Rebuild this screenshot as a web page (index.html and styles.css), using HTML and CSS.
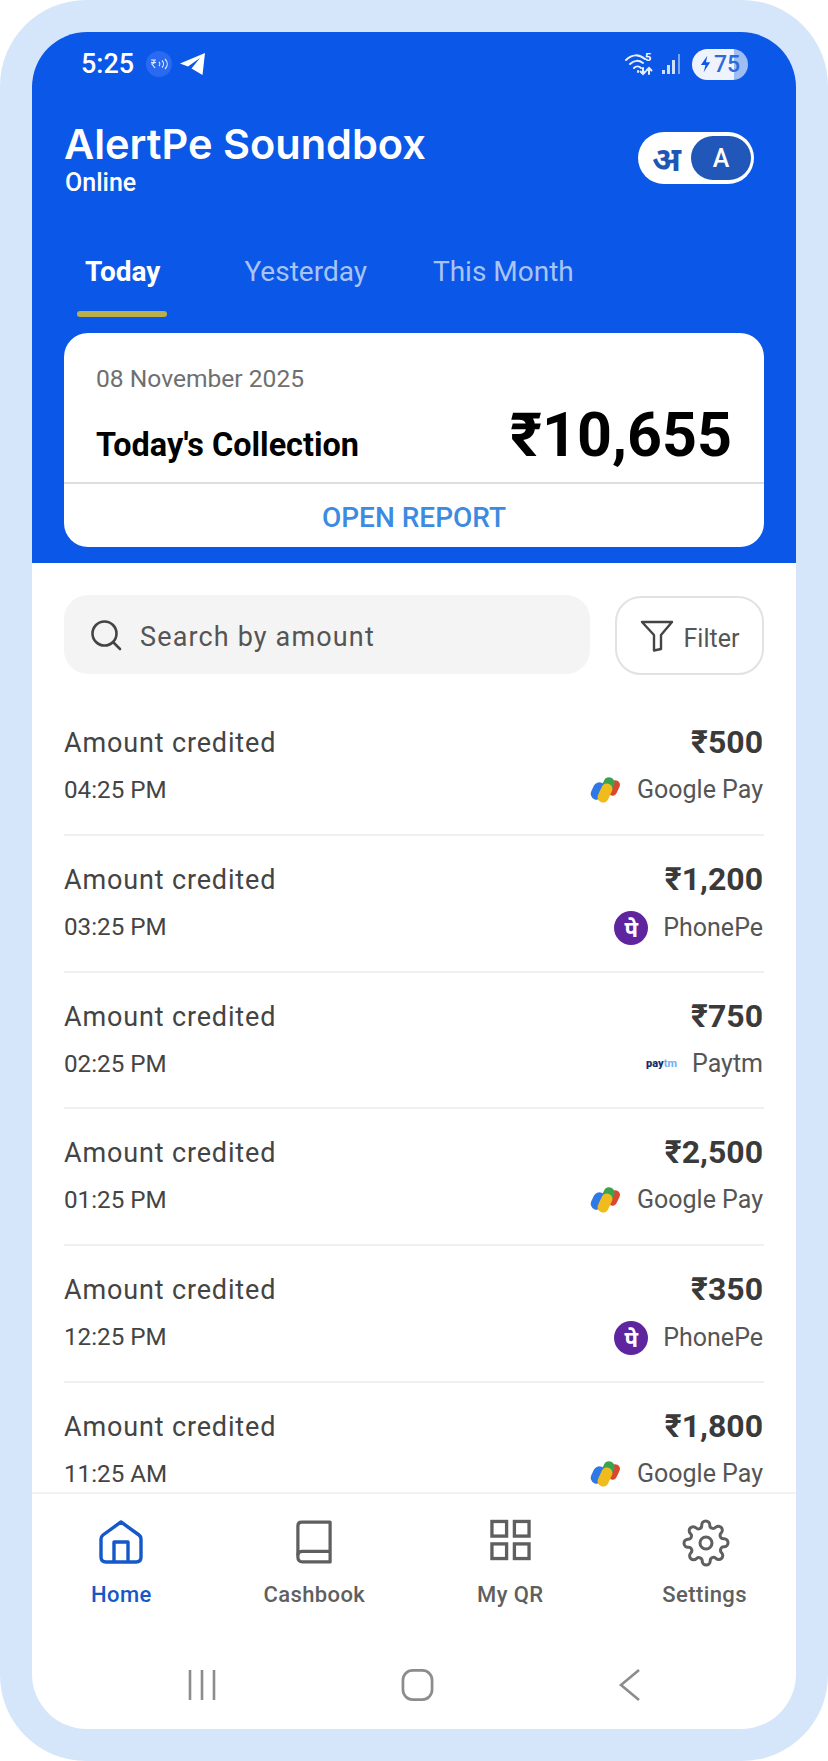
FILE: index.html
```html
<!DOCTYPE html>
<html lang="en">
<head>
    <meta charset="UTF-8">
    <meta name="viewport" content="width=device-width, initial-scale=1.0">
    <title>AlertPe Soundbox</title>
    <link rel="stylesheet" href="styles.css">
</head>
<body>
    <svg class="defs" width="0" height="0">
        <symbol id="gpay" viewBox="0 0 32 28">
            <rect x="19.500" y="4" width="9" height="16" rx="4.500" fill="#d9482f" transform="rotate(25 24 12)"/>
            <rect x="12.500" y="1" width="11" height="16" rx="5.500" fill="#3aa34f" transform="rotate(25 18 9)"/>
            <rect x="2" y="6" width="12" height="18" rx="6" fill="#2f79e6" transform="rotate(25 8 15)"/>
            <rect x="9.500" y="7" width="11" height="20" rx="5.500" fill="#f0bb1c" transform="rotate(25 15 17)"/>
        </symbol>
    </svg>

    <div class="device">
        <div class="screen">
            <header class="top">
                <div class="status">
                    <span class="clock">5:25</span>
                    <span class="upi"><svg width="18" height="12" viewBox="0 0 18 12" fill="none" stroke="#dce8ff" stroke-width="1.2"><path d="M1 2h5M1 4.5h5M2 2c3 0 3 4 0 4l3 4M9 4c1 1 1 3 0 4M12 2.500c2 2 2 5 0 7M15 1c3 3 3 7 0 10"/></svg></span>
                    <svg class="telegram" width="27" height="24" viewBox="0 0 27 24"><path d="M26 1 L1 11.500 L9 14.500 L21 6 L12.500 16.500 L23.500 23 Z" fill="#fff"/></svg>
                    <span class="status-right">
                        <svg width="30" height="26" viewBox="0 0 30 26" fill="none" stroke="#e6eeff" stroke-width="2" stroke-linecap="round"><path d="M1 9c6-6 13-6 19-1M5 13c4-4 9-4 13-1M9 17c2-2 5-2 7 0"/><path d="M13 20v1M18 17v6M15.500 20.500l2.500 2.500 2.500-2.500M24 23v-6M21.500 19.500l2.500-2.500 2.500 2.500"/><text x="20" y="10" class="wifi-five">5</text></svg>
                        <svg width="20" height="22" viewBox="0 0 20 22" fill="#cfe0ff"><rect x="0" y="17" width="3" height="4"/><rect x="5" y="12" width="3" height="9"/><rect x="10" y="7" width="3" height="14"/><rect x="16" y="1" width="2" height="20" fill="#7da4f0"/></svg>
                        <span class="battery">
                            <svg width="13" height="20" viewBox="0 0 14 20"><path d="M9 1 L2 11 H7 L5 19 L12 8 H7.500 Z" fill="#0b57e8"/></svg>
                            <span>75</span>
                        </span>
                    </span>
                </div>

                <div class="brand-row">
                    <div>
                        <h1>AlertPe Soundbox</h1>
                        <p class="online">Online</p>
                    </div>
                    <div class="lang">
                        <span class="lang-hi">अ</span>
                        <span class="lang-en">A</span>
                    </div>
                </div>

                <nav class="tabs">
                    <span class="tab tab-active">Today</span>
                    <span class="tab tab-yesterday">Yesterday</span>
                    <span class="tab tab-month">This Month</span>
                </nav>
                <div class="tab-line"></div>

                <section class="card">
                    <div class="card-body">
                        <p class="card-date">08 November 2025</p>
                        <div class="card-total">
                            <span class="card-label">Today's Collection</span>
                            <span class="card-amount">₹10,655</span>
                        </div>
                    </div>
                    <div class="card-link">OPEN REPORT</div>
                </section>
            </header>

            <div class="tools">
                <div class="search">
                    <svg width="32" height="32" viewBox="0 0 32 32" fill="none" stroke="#444" stroke-width="2.600" stroke-linecap="round"><circle cx="14.500" cy="14.500" r="12"/><path d="M24 24l6 6"/></svg>
                    <span>Search by amount</span>
                </div>
                <div class="filter">
                    <svg width="34" height="32" viewBox="0 0 34 32" fill="none" stroke="#444" stroke-width="2.400" stroke-linejoin="round"><path d="M2 2h30L21 15v14l-7 1.500V15z"/></svg>
                    <span>Filter</span>
                </div>
            </div>

            <div class="list">
                <div class="txn">
                    <div class="txn-left"><span class="txn-title">Amount credited</span><span class="txn-time">04:25 PM</span></div>
                    <div class="txn-right"><span class="txn-amount">₹500</span><span class="txn-app"><svg class="logo-gpay"><use href="#gpay"/></svg>Google Pay</span></div>
                </div>
                <div class="txn">
                    <div class="txn-left"><span class="txn-title">Amount credited</span><span class="txn-time">03:25 PM</span></div>
                    <div class="txn-right"><span class="txn-amount">₹1,200</span><span class="txn-app"><span class="logo-pe">पे</span>PhonePe</span></div>
                </div>
                <div class="txn">
                    <div class="txn-left"><span class="txn-title">Amount credited</span><span class="txn-time">02:25 PM</span></div>
                    <div class="txn-right"><span class="txn-amount">₹750</span><span class="txn-app"><span class="logo-paytm"><b>pay</b><i>tm</i></span>Paytm</span></div>
                </div>
                <div class="txn">
                    <div class="txn-left"><span class="txn-title">Amount credited</span><span class="txn-time">01:25 PM</span></div>
                    <div class="txn-right"><span class="txn-amount">₹2,500</span><span class="txn-app"><svg class="logo-gpay"><use href="#gpay"/></svg>Google Pay</span></div>
                </div>
                <div class="txn">
                    <div class="txn-left"><span class="txn-title">Amount credited</span><span class="txn-time">12:25 PM</span></div>
                    <div class="txn-right"><span class="txn-amount">₹350</span><span class="txn-app"><span class="logo-pe">पे</span>PhonePe</span></div>
                </div>
                <div class="txn">
                    <div class="txn-left"><span class="txn-title">Amount credited</span><span class="txn-time">11:25 AM</span></div>
                    <div class="txn-right"><span class="txn-amount">₹1,800</span><span class="txn-app"><svg class="logo-gpay"><use href="#gpay"/></svg>Google Pay</span></div>
                </div>
            </div>

            <nav class="bottom-nav">
                <div class="nav-item nav-active">
                    <svg width="44" height="46" viewBox="0 0 44 46" fill="none" stroke="#1558c8" stroke-width="3.400" stroke-linejoin="round"><path d="M22 3 L40 16 Q42 17.500 42 20 V38 Q42 43 37 43 H7 Q2 43 2 38 V20 Q2 17.500 4 16 Z"/><path d="M15 43 V23 H29 V43"/></svg>
                    <span>Home</span>
                </div>
                <div class="nav-item">
                    <svg width="36" height="46" viewBox="0 0 38 46" fill="none" stroke="#5f5f5f" stroke-width="3.400" stroke-linejoin="round"><path d="M6 2 H36 V44 H7 Q2 44 2 39 V6 Q2 2 6 2 Z"/><path d="M2 37 Q2 33 7 33 H36"/></svg>
                    <span>Cashbook</span>
                </div>
                <div class="nav-item nav-qr">
                    <svg width="41" height="42" viewBox="0 0 42 42" fill="none" stroke="#5f5f5f" stroke-width="3.400"><rect x="2" y="2" width="15" height="15"/><rect x="25" y="2" width="15" height="15"/><rect x="2" y="25" width="15" height="15"/><rect x="25" y="25" width="15" height="15"/></svg>
                    <span>My QR</span>
                </div>
                <div class="nav-item">
                    <svg class="gear" width="48" height="48" viewBox="0 0 24 24" fill="none" stroke="#5f5f5f" stroke-width="1.500" stroke-linecap="round" stroke-linejoin="round"><circle cx="12" cy="12" r="3"/><path d="M19.400 15a1.650 1.650 0 0 0 .33 1.820l.06.06a2 2 0 1 1-2.830 2.830l-.06-.06a1.650 1.650 0 0 0-2.800 1.170V21a2 2 0 0 1-4 0v-.09a1.650 1.650 0 0 0-2.820-1.150l-.06.06a2 2 0 1 1-2.830-2.830l.06-.06a1.650 1.650 0 0 0-1.170-2.800H3a2 2 0 0 1 0-4h.09a1.650 1.650 0 0 0 1.150-2.820l-.06-.06a2 2 0 1 1 2.830-2.830l.06.06a1.650 1.650 0 0 0 2.800-1.170V3a2 2 0 0 1 4 0v.09a1.650 1.650 0 0 0 2.820 1.150l.06-.06a2 2 0 1 1 2.830 2.830l-.06.06a1.650 1.650 0 0 0 1.170 2.800H21a2 2 0 0 1 0 4h-.09a1.650 1.650 0 0 0-1.510 1z"/></svg>
                    <span>Settings</span>
                </div>
            </nav>

            <div class="system-nav">
                <svg width="30" height="32" viewBox="0 0 30 32" stroke="#8c8c8c" stroke-width="2.600"><path d="M3 1v30M15 1v30M27 1v30"/></svg>
                <svg width="33" height="34" viewBox="0 0 34 34" fill="none" stroke="#8c8c8c" stroke-width="2.800"><rect x="2" y="2" width="30" height="30" rx="10"/></svg>
                <svg width="24" height="34" viewBox="0 0 24 34" fill="none" stroke="#8c8c8c" stroke-width="2.600"><path d="M21 2 L3 17 L21 32"/></svg>
            </div>
        </div>
    </div>
</body>
</html>
```

FILE: styles.css
```css
* {
    box-sizing: border-box;
}
html, body {
    margin: 0;
    padding: 0;
    background-color: #fff;
}
body {
    font-family: Roboto, "Noto Sans", "Liberation Sans", sans-serif;
    color: #333;
}
h1, p {
    margin: 0;
}
.defs {
    position: absolute;
}

.device {
    width: 828px;
    height: 1761px;
    padding: 32px 32px 31px;
    background-color: #d6e6fa;
    border-radius: 86px;
}
.screen {
    height: 1697px;
    background-color: #fff;
    border-radius: 55px;
    overflow: hidden;
    display: flex;
    flex-direction: column;
}

/* blue header */
.top {
    height: 531px;
    flex: none;
    padding: 0 32px;
    background-color: #0b57e8;
    color: #fff;
}
.status {
    height: 64px;
    padding: 0 16px 0 17px;
    display: flex;
    align-items: center;
    gap: 12px;
}
.clock {
    font-size: 27px;
    font-weight: 500;
}
.upi {
    width: 26px;
    height: 26px;
    border-radius: 50%;
    background-color: #2a6af0;
    display: flex;
    align-items: center;
    justify-content: center;
}
.telegram {
    margin-left: -5px;
}
.status-right {
    margin-left: auto;
    display: flex;
    align-items: center;
    gap: 7px;
}
.wifi-five {
    font-size: 11px;
    font-weight: 700;
    fill: #fff;
    stroke: none;
}
.battery {
    width: 56px;
    height: 31px;
    margin-left: 3px;
    padding-left: 7px;
    border-radius: 16px;
    background: linear-gradient(to right, #eef3fd 75%, #9dbdf3 75%);
    color: #2f6bd8;
    font-size: 23px;
    font-weight: 500;
    display: flex;
    align-items: center;
    gap: 2px;
}
.brand-row {
    height: 135px;
    display: flex;
    justify-content: space-between;
}
h1 {
    margin-top: 21px;
    font-family: Inter, Roboto, sans-serif;
    font-size: 41.500px;
    font-weight: 600;
    line-height: 54px;
}
.online {
    margin-left: 1px;
    font-size: 25px;
    font-weight: 500;
    line-height: 24px;
}
.lang {
    width: 116px;
    height: 52px;
    margin: 36px 10px 0 0;
    padding: 3px;
    border-radius: 26px;
    background-color: #fff;
    display: flex;
    align-items: center;
    justify-content: space-between;
}
.lang-hi {
    margin-left: 11px;
    color: #1f56b5;
    font-family: "Noto Sans", "Noto Sans CJK SC", sans-serif;
    font-size: 34px;
    font-weight: 700;
    line-height: 40px;
}
.lang-en {
    width: 60px;
    height: 44px;
    border-radius: 22px;
    background-color: #2057b8;
    color: #fff;
    font-size: 25px;
    font-weight: 500;
    display: flex;
    align-items: center;
    justify-content: center;
}
.tabs {
    height: 80px;
    display: flex;
    align-items: center;
    font-size: 28px;
    color: #a8c4f5;
}
.tab-active {
    margin-left: 21px;
    color: #fff;
    font-weight: 700;
}
.tab-yesterday {
    margin-left: 84px;
}
.tab-month {
    margin-left: 66px;
}
.tab-line {
    width: 90px;
    height: 6px;
    margin: 0 0 16px 13px;
    border-radius: 3px;
    background-color: #b9b04a;
}

/* total card */
.card {
    height: 214px;
    border-radius: 24px;
    background-color: #fff;
    color: #000;
}
.card-body {
    height: 151px;
    padding: 28px 32px 0;
    border-bottom: 2px solid #dedede;
}
.card-date {
    color: #6f6f6f;
    font-size: 24.600px;
    line-height: 36px;
}
.card-total {
    display: flex;
    justify-content: space-between;
    align-items: baseline;
    margin-top: 4px;
}
.card-label {
    font-size: 32.400px;
    font-weight: 700;
}
.card-amount {
    font-size: 61px;
    font-weight: 700;
    line-height: 68px;
}
.card-link {
    height: 63px;
    padding-top: 3px;
    color: #3d8be0;
    font-size: 28px;
    font-weight: 500;
    display: flex;
    align-items: center;
    justify-content: center;
}

/* search + filter */
.tools {
    flex: none;
    padding: 32px 32px 0;
    display: flex;
    justify-content: space-between;
    align-items: flex-start;
}
.search {
    width: 526px;
    height: 79px;
    padding-left: 26px;
    border-radius: 24px;
    background-color: #f4f4f4;
    color: #555;
    font-size: 27px;
    letter-spacing: 1.150px;
    display: flex;
    align-items: center;
    gap: 18px;
}
.search span, .filter span {
    padding-top: 5px;
}
.filter {
    width: 149px;
    height: 79px;
    margin-top: 1px;
    border: 2px solid #e2e2e2;
    border-radius: 26px;
    color: #555;
    font-size: 25px;
    display: flex;
    align-items: center;
    justify-content: center;
    gap: 10px;
}

/* transactions */
.list {
    flex: 1;
    margin-top: 24px;
    padding: 0 32px;
    overflow: hidden;
}
.txn {
    height: 136.800px;
    padding-top: 28px;
    border-bottom: 2px solid #f0f0f0;
    display: flex;
    justify-content: space-between;
}
.txn:last-child {
    border-bottom: none;
}
.txn-left, .txn-right {
    display: flex;
    flex-direction: column;
    gap: 15px;
}
.txn-right {
    align-items: flex-end;
    padding-right: 1px;
}
.txn-title {
    font-size: 27px;
    line-height: 32px;
    color: #444;
    letter-spacing: 0.850px;
}
.txn-time {
    font-size: 24.200px;
    line-height: 32px;
    color: #444;
}
.txn-amount {
    margin-top: -1px;
    font-size: 32px;
    font-weight: 700;
    line-height: 32px;
    color: #3a3a3a;
}
.txn-app {
    margin-top: 1px;
    font-size: 25px;
    line-height: 32px;
    color: #555;
    display: flex;
    align-items: center;
    gap: 15px;
}
.logo-gpay {
    width: 32px;
    height: 28px;
}
.logo-pe {
    width: 34px;
    height: 34px;
    border-radius: 50%;
    background-color: #5f259f;
    color: #fff;
    font-family: "Noto Sans", Roboto, sans-serif;
    font-size: 22px;
    font-weight: 700;
    display: flex;
    align-items: center;
    justify-content: center;
}
.logo-paytm {
    font-size: 11px;
    font-weight: 700;
}
.logo-paytm b {
    color: #14306e;
}
.logo-paytm i {
    color: #6db1ee;
    font-style: normal;
}

/* bottom navigation */
.bottom-nav {
    height: 137px;
    flex: none;
    padding: 25px 49px 0 59px;
    border-top: 2px solid #f2f2f2;
    display: flex;
    justify-content: space-between;
    align-items: flex-start;
}
.nav-item {
    height: 88px;
    display: flex;
    flex-direction: column;
    align-items: center;
    justify-content: space-between;
    color: #5f5f5f;
    font-size: 22px;
    font-weight: 500;
    letter-spacing: 0.400px;
}
.nav-qr {
    margin-right: 7px;
}
.nav-active {
    color: #1558c8;
}
.gear {
    margin-left: 3px;
}
.system-nav {
    height: 100px;
    flex: none;
    padding: 12px 154px 0 155px;
    display: flex;
    align-items: center;
    justify-content: space-between;
}
```
